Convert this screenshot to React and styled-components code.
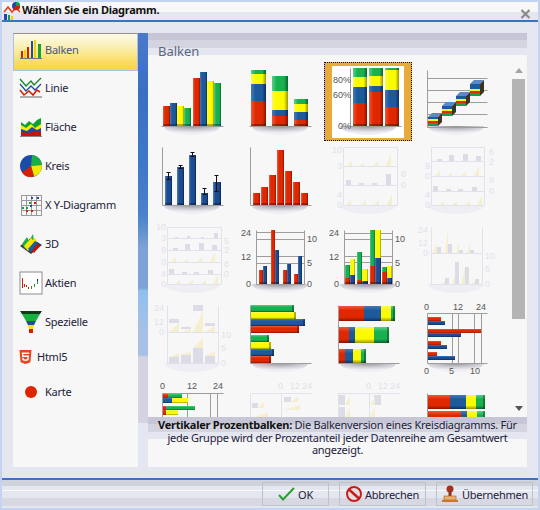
import React from "react";
import styled, { createGlobalStyle } from "styled-components";
import { FaHtml5 } from "react-icons/fa";

const FONT = `"Noto Sans", "DejaVu Sans", sans-serif`;

const Global = createGlobalStyle`
  html, body { margin: 0; padding: 0; background: #e4e6f0; }
  * { box-sizing: border-box; }
`;

const Window = styled.div`
  width: 540px;
  height: 510px;
  display: flex;
  flex-direction: column;
  border: 2px solid #c2d4f0;
  background: #e4e6f0;
  font-family: ${FONT};
  font-size: 11px;
  letter-spacing: -0.25px;
  color: #1c2238;
  overflow: hidden;
`;

const TitleBar = styled.div`
  height: 20px;
  flex: none;
  display: flex;
  align-items: center;
  gap: 1px;
  padding: 0 7px 0 1px;
  border-bottom: 2px solid #3a72c6;
  background: linear-gradient(#f7f7f7 0 10px, #e4e6f0 10px);
`;

const TitleText = styled.span`
  flex: 1;
  font-weight: bold;
  font-size: 11px;
  color: #111;
  margin-top: -4px;
`;

const Main = styled.div`
  flex: 1;
  min-height: 0;
  display: flex;
  padding: 11px 11px 11px;
`;

const Sidebar = styled.div`
  width: 125px;
  flex: none;
  display: flex;
  flex-direction: column;
  background: #f7f7f7;
`;

const SideItem = styled.div`
  height: ${(p) => (p.$short ? 31 : 39)}px;
  flex: none;
  display: flex;
  align-items: center;
  gap: ${(p) => (p.$tight ? 4 : 2)}px;
  padding-left: ${(p) => (p.$tight ? 5 : 6)}px;
  padding-bottom: 8px;
  color: ${(p) => (p.$active ? "#4a5674" : "#1c2238")};
  ${(p) =>
    p.$active &&
    `
    height: 38px;
    margin-bottom: 1px;
    border: 1px solid #a9c2e6;
    border-top: 1px solid #9a8f88;
    padding-left: 5px;
    padding-bottom: 6px;
    background: linear-gradient(#fdfbe8 0, #faf0b8 12px, #fbe88e 20px, #fbdc62 28px, #fad344 100%);
  `}
`;

const IconSlot = styled.span`
  width: ${(p) => p.$size || 24}px;
  height: ${(p) => p.$size || 24}px;
  flex: none;
  display: flex;
  align-items: center;
  justify-content: center;
  color: #e4461f;
`;

const Strip = styled.div`
  width: 10px;
  flex: none;
  height: 390px;
  background: linear-gradient(
    #4a78cc 0,
    #3a70c4 60px,
    #3f78c8 130px,
    #4a80cc 180px,
    #5a90cc 195px,
    #7ea2d8 215px,
    #7ea2d8 255px,
    #90c0ee 258px,
    #a8c0e6 300px,
    #a8c0e6 322px,
    #d4d4e0 324px
  );
`;

const ChartPanel = styled.div`
  flex: 1;
  min-width: 0;
  display: flex;
  flex-direction: column;
  background: #f7f7f7;
`;

const bands = `linear-gradient(#c6c6d6 0 7px, #d4d4e0 7px 15px, #e4e6f0 15px 22px, #f7f7f7 22px)`;

const PanelHead = styled.div`
  height: 22px;
  flex: none;
  padding: 10px 0 0 10px;
  font-size: 13px;
  line-height: 16px;
  letter-spacing: 0;
  color: #5c6680;
  background: ${bands};
`;

const GalleryRow = styled.div`
  flex: 1;
  min-height: 0;
  display: flex;
`;

const Gallery = styled.div`
  width: 364px;
  flex: none;
  padding-top: 7px;
  overflow: hidden;
  display: grid;
  grid-template-columns: repeat(4, 88px);
  grid-auto-rows: 79px;
`;

const Cell = styled.div`
  width: 88px;
  height: 79px;
  ${(p) =>
    p.$selected &&
    `
    background: linear-gradient(#fff, #fff) 8px 4px / 72px 72px no-repeat, #e6ab3a;
    outline: 1px dotted #111;
    outline-offset: -1px;
  `}
  svg { display: block; }
`;

const ScrollBar = styled.div`
  width: 13px;
  flex: none;
  display: flex;
  flex-direction: column;
  align-items: center;
  padding: 13px 0 6px;
`;

const Arrow = styled.span`
  width: 0;
  height: 0;
  border-left: 4px solid transparent;
  border-right: 4px solid transparent;
  ${(p) => (p.$down ? "border-top: 5px solid #555;" : "border-bottom: 5px solid #a4a4a4;")}
  ${(p) => p.$down && "margin-top: auto;"}
`;

const Thumb = styled.div`
  width: 13px;
  height: 240px;
  margin-top: 6px;
  background: #b4b4b4;
`;

const Description = styled.div`
  height: 50px;
  flex: none;
  padding: 2px 4px 0;
  text-align: center;
  line-height: 12.5px;
  font-size: 11px;
  color: #1c2238;
  background: ${bands};
  b { color: #111; }
`;

const Footer = styled.div`
  height: 30px;
  flex: none;
  display: flex;
  justify-content: flex-end;
  gap: 10px;
  padding: 2px 5px 0 0;
  border-top: 2px solid #3a72c6;
  background: linear-gradient(
    #d0d2dc 0 6px,
    #e4e6f0 6px 10px,
    #fafafc 10px 11px,
    #e4e6f0 11px 18px,
    #d8d8e2 18px 26px,
    #e4e6f0 26px
  );
`;

const Button = styled.button`
  width: ${(p) => p.$width}px;
  height: 24px;
  display: flex;
  align-items: center;
  justify-content: center;
  gap: 3px;
  padding: 0;
  border: 1px solid #b8c6c6;
  background: transparent;
  font-family: ${FONT};
  font-size: 11px;
  letter-spacing: -0.25px;
  color: #1c2238;
`;

const Defs = styled.svg`
  width: 0;
  height: 0;
  flex: none;
`;

/* chart helpers, everything in 88x79 cell coordinates */
const RAMP = {
  r: ["#f0583a", "#e02800", "#8a1400"],
  b: ["#4878b8", "#1c5a9c", "#0e2c5c"],
  y: ["#fff84a", "#fafa00", "#989400"],
  g: ["#58d088", "#18b050", "#0a6030"],
  n: ["#5080c0", "#1c4c90", "#0a2450"],
};

const hl = (y, x1 = 14, x2 = 75) => [x1, y, x2, y];
const vl = (x, y1 = 6, y2 = 64) => [x, y1, x, y2];

const col = (x, w, c, top, bottom = 64) => ({ x, w, c, top, bottom });
const stack = (x, w, parts, bottom = 64) => {
  let low = bottom;
  return parts.map(([c, top]) => {
    const bar = col(x, w, c, top, low);
    low = top;
    return bar;
  });
};
const hstack = (y, h, x0, parts) => {
  let from = x0;
  return parts.map(([c, to], i) => {
    const bar = { y, h, x: from, to, c, cap: h > 5 && i === parts.length - 1 };
    from = to;
    return bar;
  });
};
const wedge = (x, w, h, base) => ({ x, w, top: base - h, bottom: base });
const gray = (x, w, h, base) => ({ x, w, top: base - h, bottom: base });

const SPECS = [
  // row 1
  {
    shadow: true,
    lines: [hl(64, 13, 75)],
    bars: [
      col(15, 7, "r", 44), col(22, 7, "b", 41), col(29, 7, "y", 44), col(36, 7, "g", 46),
      col(45, 7, "r", 16), col(52, 7, "b", 10), col(59, 7, "y", 19), col(66, 7, "g", 21),
    ],
  },
  {
    shadow: true,
    lines: [hl(64, 13, 75)],
    bars: [
      ...stack(15, 15, [["r", 39], ["b", 22], ["y", 12], ["g", 8]]),
      ...stack(36, 16, [["r", 54], ["b", 48], ["y", 29], ["g", 14]]),
      ...stack(58, 14, [["r", 58], ["b", 50], ["y", 42], ["g", 37]]),
    ],
  },
  {
    shadow: true,
    selected: true,
    lines: [vl(26, 6, 64), hl(64, 26, 77)],
    bars: [
      ...stack(29, 14, [["r", 41], ["b", 25], ["y", 15], ["g", 6]]),
      ...stack(45, 14, [["r", 30], ["b", 24], ["y", 14], ["g", 6]]),
      ...stack(61, 14, [["r", 45], ["b", 28], ["y", 8], ["g", 6]]),
    ],
    labels: [[9, 21, "80%"], [9, 36, "60%"], [14, 67, "0%"]],
  },
  {
    shadow: true,
    lines: [hl(16, 15, 75), hl(28, 15, 75), hl(40, 15, 75), hl(52, 15, 75), vl(15, 8, 65), hl(65, 15, 75)],
    steps: [[16, 51, 13], [30, 40, 14], [44, 30, 14], [58, 18, 16]],
  },
  // row 2
  {
    shadow: true,
    lines: [vl(14), hl(64)],
    bars: [col(17, 7, "n", 35), col(29, 7, "n", 26), col(41, 7, "n", 14), col(53, 7, "n", 52), col(65, 8, "n", 41)],
    errs: [[20, 31, 39], [32, 24, 28], [44, 11, 16], [56, 47, 54], [68, 34, 51]],
  },
  {
    shadow: true,
    lines: [vl(14), hl(64)],
    bars: [17, 25, 33, 41, 49, 57, 65].map((x, i) => col(x, 7, "r", [52, 46, 34, 9, 30, 41, 52][i])),
  },
  {
    faint: true,
    lines: [hl(6, 19, 73), hl(25, 19, 73), hl(44, 19, 73), hl(64, 19, 73), vl(19, 6, 64), vl(73, 6, 64)],
    wedges: [
      wedge(23, 5, 5, 25), wedge(35, 5, 3, 25), wedge(49, 5, 5, 25), wedge(62, 5, 12, 25),
      wedge(22, 5, 5, 64), wedge(37, 5, 5, 64), wedge(50, 5, 5, 64), wedge(63, 5, 11, 64),
    ],
    grays: [gray(22, 5, 5, 44), gray(35, 5, 2, 44), gray(48, 5, 2, 44), gray(62, 5, 11, 44)],
    labels: [[8, 12, "10"], [13, 28, "3"], [77, 36, "8"], [77, 47, "0"], [13, 57, "4"], [13, 67, "0"]],
  },
  {
    faint: true,
    lines: [hl(6, 19, 72), hl(20, 19, 72), hl(35, 19, 72), hl(50, 19, 72), hl(64, 19, 72), vl(19, 6, 64), vl(72, 6, 64)],
    grays: [
      gray(25, 5, 2, 20), gray(37, 5, 6, 20), gray(51, 5, 7, 20), gray(64, 5, 5, 20),
      gray(21, 5, 5, 50), gray(34, 5, 2, 50), gray(46, 5, 2, 50), gray(60, 5, 4, 50),
    ],
    wedges: [
      wedge(23, 5, 5, 35), wedge(35, 5, 3, 35), wedge(49, 5, 5, 35), wedge(62, 5, 10, 35),
      wedge(27, 5, 4, 64), wedge(40, 5, 4, 64), wedge(53, 5, 4, 64), wedge(65, 5, 9, 64),
    ],
    labels: [[77, 14, "6"], [77, 24, "2"], [77, 42, "8"], [77, 53, "0"], [13, 28, "9"], [13, 38, "0"], [13, 57, "4"], [13, 67, "0"]],
  },
  // row 3
  {
    faint: true,
    lines: [hl(7, 19, 73), hl(18, 19, 73), hl(30, 19, 73), hl(42, 19, 73), hl(54, 19, 73), hl(64, 19, 73), vl(19, 7, 64), vl(73, 7, 64)],
    grays: [
      gray(27, 3, 1, 18), gray(39, 3, 2, 18), gray(53, 3, 1, 18), gray(66, 4, 5, 18),
      gray(25, 5, 2, 30), gray(37, 5, 6, 30), gray(51, 5, 7, 30), gray(64, 5, 5, 30),
      gray(21, 5, 5, 54), gray(34, 5, 2, 54), gray(46, 5, 2, 54), gray(60, 5, 4, 54),
    ],
    wedges: [
      wedge(23, 5, 5, 42), wedge(35, 5, 3, 42), wedge(49, 5, 5, 42), wedge(62, 5, 10, 42),
      wedge(27, 5, 4, 64), wedge(40, 5, 4, 64), wedge(53, 5, 4, 64), wedge(65, 5, 9, 64),
    ],
    labels: [[8, 10, "10"], [13, 21, "3"], [13, 33, "9"], [13, 45, "0"], [13, 57, "4"], [13, 67, "0"], [76, 24, "5"], [76, 33, "2"], [76, 47, "8"], [76, 57, "0"]],
  },
  {
    shadow: true,
    lines: [hl(12, 20, 68), hl(19, 20, 68), hl(36, 20, 68), hl(43, 20, 68), vl(20, 10, 64), vl(68, 10, 64), hl(64, 20, 68)],
    bars: [
      col(23, 4, "r", 50), col(27, 4, "n", 46), col(35, 4, "r", 10), col(39, 4, "n", 30),
      col(47, 4, "r", 50), col(51, 4, "n", 44), col(58, 4, "r", 54), col(62, 4, "n", 36),
    ],
    labels: [[5, 16, "24"], [5, 40, "12"], [10, 67, "0"], [71, 22, "10"], [71, 46, "5"], [71, 67, "0"]],
  },
  {
    shadow: true,
    lines: [hl(13, 20, 68), hl(19, 20, 68), hl(36, 20, 68), hl(42, 20, 68), vl(20, 10, 64), vl(68, 10, 64), hl(64, 20, 68)],
    bars: [
      ...stack(21, 5, [["r", 58], ["g", 45]]), ...stack(26, 5, [["n", 55], ["y", 39]]),
      ...stack(33, 5, [["r", 60], ["g", 32]]), ...stack(38, 6, [["n", 61], ["y", 49]]),
      ...stack(46, 5, [["r", 46], ["g", 10]]), ...stack(51, 6, [["n", 38], ["y", 10]]),
      ...stack(58, 5, [["r", 52], ["g", 47]]), ...stack(63, 5, [["n", 58], ["y", 46]]),
    ],
    labels: [[5, 16, "24"], [5, 40, "12"], [10, 67, "0"], [71, 22, "10"], [71, 46, "5"], [71, 67, "0"]],
  },
  {
    faint: true,
    lines: [vl(19, 7, 64), vl(70, 7, 64), hl(33, 19, 70), hl(64, 19, 70)],
    wedges: [
      wedge(21, 4, 10, 33), wedge(33, 3, 23, 33), wedge(44, 3, 10, 33), wedge(55, 3, 10, 33),
      wedge(29, 4, 3, 64), wedge(40, 3, 9, 64), wedge(49, 4, 17, 64), wedge(59, 4, 3, 64),
    ],
    grays: [
      gray(25, 4, 6, 33), gray(36, 4, 9, 33), gray(47, 4, 3, 33), gray(58, 4, 3, 33),
      gray(33, 4, 6, 64), gray(43, 4, 22, 64), gray(53, 4, 17, 64), gray(63, 4, 5, 64),
    ],
    labels: [[6, 13, "24"], [6, 26, "12"], [11, 36, "0"], [73, 39, "10"], [73, 52, "5"], [73, 67, "0"]],
  },
  // row 4
  {
    faint: true,
    lines: [vl(19, 6, 64), vl(70, 6, 64), hl(33, 19, 70), hl(64, 19, 70)],
    grays: [
      gray(21, 10, 4, 24), gray(33, 10, 2, 30), gray(45, 10, 6, 12), gray(57, 10, 3, 27),
      gray(21, 10, 6, 64), gray(33, 10, 8, 64), gray(45, 10, 15, 64), gray(57, 10, 7, 64),
    ],
    wedges: [
      wedge(21, 10, 9, 33), wedge(33, 10, 3, 33), wedge(45, 10, 21, 33), wedge(57, 10, 6, 33),
      wedge(21, 10, 4, 58), wedge(33, 10, 4, 56), wedge(45, 10, 10, 49), wedge(57, 10, 5, 57),
    ],
    labels: [[6, 12, "24"], [6, 26, "12"], [11, 36, "0"], [73, 39, "10"], [73, 52, "5"], [73, 67, "0"]],
  },
  {
    shadow: true,
    lines: [vl(14), hl(64)],
    hbars: [
      ...hstack(6, 7, 15, [["g", 58]]), ...hstack(13, 7, 15, [["y", 60]]),
      ...hstack(20, 7, 15, [["b", 69]]), ...hstack(27, 7, 15, [["r", 63]]),
      ...hstack(36, 7, 15, [["g", 33]]), ...hstack(43, 7, 15, [["y", 35]]),
      ...hstack(50, 7, 15, [["b", 38]]), ...hstack(57, 7, 15, [["r", 35]]),
    ],
  },
  {
    shadow: true,
    lines: [vl(14, 6, 64), hl(64)],
    hbars: [
      ...hstack(7, 15, 15, [["r", 40], ["b", 57], ["y", 67], ["g", 71]]),
      ...hstack(28, 16, 15, [["r", 25], ["b", 31], ["y", 50], ["g", 65]]),
      ...hstack(50, 14, 15, [["r", 21], ["b", 29], ["y", 37], ["g", 42]]),
    ],
  },
  {
    shadow: true,
    lines: [hl(14, 15, 75), vl(15, 14, 64), hl(64, 15, 75), vl(40, 14, 64), vl(46, 14, 64), vl(62, 14, 64), vl(69, 14, 64)],
    hbars: [
      ...hstack(18, 4, 16, [["r", 29]]), ...hstack(22, 4, 16, [["n", 33]]),
      ...hstack(30, 4, 16, [["r", 69]]), ...hstack(34, 4, 16, [["n", 49]]),
      ...hstack(42, 4, 16, [["r", 29]]), ...hstack(46, 4, 16, [["n", 35]]),
      ...hstack(53, 4, 16, [["r", 25]]), ...hstack(57, 4, 16, [["n", 43]]),
    ],
    labels: [[12, 11, "0"], [41, 11, "12"], [64, 11, "24"], [12, 75, "0"], [37, 75, "5"], [58, 75, "10"]],
  },
  // row 5, cut off by the description
  {
    lines: [hl(15, 14, 75), vl(14, 15, 40), vl(39, 15, 40), vl(62, 15, 40), vl(69, 15, 40)],
    hbars: [
      ...hstack(16, 4, 15, [["r", 20], ["g", 34]]), ...hstack(20, 5, 15, [["b", 24], ["y", 40]]),
      ...hstack(28, 4, 15, [["r", 18], ["g", 47]]), ...hstack(32, 5, 15, [["r", 18], ["y", 30]]),
    ],
    labels: [[12, 11, "0"], [39, 11, "12"], [65, 11, "24"]],
  },
  {
    faint: true,
    lines: [hl(15, 14, 75), vl(14, 15, 40), vl(45, 15, 40)],
    grays: [gray(16, 6, 5, 30), gray(48, 7, 5, 24)],
    wedges: [wedge(22, 6, 6, 30), wedge(55, 7, 6, 24), wedge(16, 16, 6, 40), wedge(48, 16, 5, 32)],
    labels: [[42, 11, "0"], [54, 11, "12"], [66, 11, "24"]],
  },
  {
    faint: true,
    lines: [hl(15, 14, 75), vl(14, 15, 40), vl(45, 15, 40)],
    grays: [gray(15, 6, 10, 27), gray(15, 6, 10, 39), gray(50, 7, 10, 27)],
    wedges: [wedge(21, 5, 10, 27), wedge(21, 5, 10, 39), wedge(46, 5, 8, 27), wedge(46, 5, 10, 39)],
    labels: [[42, 11, "0"], [54, 11, "12"], [66, 11, "24"]],
  },
  {
    lines: [vl(15, 15, 40)],
    hbars: [
      ...hstack(17, 14, 16, [["r", 38], ["b", 54], ["y", 64], ["g", 73]]),
      ...hstack(33, 14, 16, [["r", 49], ["b", 55], ["y", 65], ["g", 73]]),
    ],
  },
];

function Step({ x, y, h }) {
  const front = y + 4;
  return (
    <g>
      <polygon points={`${x},${front} ${x + 4},${y} ${x + 14},${y} ${x + 10},${front}`} fill="#5a88c8" />
      <polygon points={`${x + 10},${front} ${x + 14},${y} ${x + 14},${y + h - 4} ${x + 10},${y + h}`} fill="#3c3420" />
      <rect x={x} y={front} width={10} height={h - 4} fill="#18a048" />
      <rect x={x} y={front} width={10} height={h - 7} fill="#e02800" />
      <rect x={x} y={front} width={10} height={h - 9} fill="#fafa00" />
      <rect x={x} y={front} width={10} height={h - 11} fill="#1c5a9c" />
    </g>
  );
}

function Chart({ spec }) {
  const { faint, shadow, lines = [], bars = [], hbars = [], errs = [], steps = [], labels = [], grays = [], wedges = [] } = spec;
  const line = faint ? "#e2e2ec" : "#a09c9c";
  return (
    <svg width="88" height="79" viewBox="0 0 88 79">
      {(shadow || faint) && <path d="M16,64 A28,9 0 0 0 72,64 Z" fill={faint ? "#eeeef4" : "url(#floor)"} />}
      {lines.map((l, i) => (
        <line key={i} x1={l[0]} y1={l[1] + 0.5} x2={l[2]} y2={l[3] + 0.5} transform="translate(0.5 0)" stroke={line} />
      ))}
      {grays.map((b, i) => (
        <rect key={i} x={b.x} y={b.top} width={b.w} height={b.bottom - b.top} fill="#dcdce6" />
      ))}
      {wedges.map((b, i) => (
        <polygon
          key={i}
          points={`${b.x},${b.bottom} ${b.x + b.w},${b.bottom} ${b.x + b.w},${b.top} ${b.x + b.w / 2},${b.top + (b.bottom - b.top) / 2}`}
          fill="#f6efcf"
        />
      ))}
      {bars.map((b, i) => (
        <g key={i}>
          <rect x={b.x} y={b.top} width={b.w} height={b.bottom - b.top} fill={`url(#v-${b.c})`} />
          {b.bottom === 64 && <rect x={b.x} y={62} width={b.w} height={2} fill="#000" opacity="0.3" />}
        </g>
      ))}
      {hbars.map((b, i) => (
        <g key={i}>
          <rect x={b.x} y={b.y} width={b.to - b.x} height={b.h} fill={`url(#h-${b.c})`} />
          {b.cap && <rect x={b.to - 2} y={b.y} width={2} height={b.h} fill="#000" opacity="0.3" />}
        </g>
      ))}
      {errs.map(([x, y1, y2], i) => (
        <path key={i} d={`M${x + 0.5},${y1} V${y2} M${x - 1.5},${y1 + 0.5} h4 M${x - 1.5},${y2 - 0.5} h4`} stroke="#111" fill="none" />
      ))}
      {steps.map(([x, y, h], i) => (
        <Step key={i} x={x} y={y} h={h} />
      ))}
      {labels.map(([x, y, t], i) => (
        <text key={i} x={x} y={y} fontFamily='"Liberation Sans", sans-serif' fontSize="9" letterSpacing="0" fill={faint ? "#e2e2ea" : "#555"}>
          {t}
        </text>
      ))}
    </svg>
  );
}

function SharedDefs() {
  return (
    <Defs aria-hidden="true">
      <defs>
        {Object.entries(RAMP).map(([k, [a, m, d]]) => (
          <React.Fragment key={k}>
            <linearGradient id={`v-${k}`} x1="0" x2="1" y1="0" y2="0">
              <stop offset="0" stopColor={a} />
              <stop offset="0.3" stopColor={m} />
              <stop offset="0.75" stopColor={m} />
              <stop offset="1" stopColor={d} />
            </linearGradient>
            <linearGradient id={`h-${k}`} x1="0" x2="0" y1="0" y2="1">
              <stop offset="0" stopColor={a} />
              <stop offset="0.3" stopColor={m} />
              <stop offset="0.75" stopColor={m} />
              <stop offset="1" stopColor={d} />
            </linearGradient>
          </React.Fragment>
        ))}
        <radialGradient id="floor" cx="0.5" cy="0" r="0.75">
          <stop offset="0" stopColor="#8c8c94" />
          <stop offset="0.5" stopColor="#c4c4cc" />
          <stop offset="1" stopColor="#eeeef4" />
        </radialGradient>
      </defs>
    </Defs>
  );
}

const BalkenIcon = () => (
  <svg width="24" height="24" viewBox="0 0 24 24">
    <rect x="2" y="14" width="2" height="7" fill="#d81e00" />
    <rect x="5" y="13" width="2" height="8" fill="#f0d000" />
    <rect x="8" y="10" width="2" height="11" fill="#d81e00" />
    <rect x="12" y="4" width="2" height="17" fill="#1c4ca8" />
    <rect x="15" y="3" width="2" height="18" fill="#f0d000" />
    <rect x="19" y="7" width="3" height="14" fill="#18a030" />
    <rect x="1" y="21" width="22" height="1" fill="#6c7878" />
  </svg>
);

const LinieIcon = () => (
  <svg width="24" height="24" viewBox="0 0 24 24" fill="none" strokeWidth="1.3">
    <path d="M1,3 L7,10 L12,5 L15,9 L22,2" stroke="#108a20" />
    <path d="M1,8 L7,15 L12,10 L16,14 L22,8" stroke="#1c4ca8" />
    <path d="M1,14 L5,19 L10,15 L14,19 L18,14 L21,16" stroke="#d81e00" strokeWidth="1.6" />
    <path d="M1,21 H23" stroke="#808888" />
  </svg>
);

const FlaecheIcon = () => (
  <svg width="24" height="24" viewBox="0 0 24 24">
    <path d="M2,7 L6,10 L10,6 L14,9 L18,5 L22,3 V21 H2 Z" fill="#10a030" />
    <path d="M2,10 L7,13 L12,9 L16,13 L22,9 V21 H2 Z" fill="#f8f000" />
    <path d="M2,14 L8,16 L13,12 L18,15 L22,13 V21 H2 Z" fill="#1c4ca8" />
    <path d="M2,17 L10,18 L16,16 L22,17 V21 H2 Z" fill="#c81400" />
    <rect x="1" y="21" width="22" height="1" fill="#808888" />
  </svg>
);

const KreisIcon = () => (
  <svg width="24" height="24" viewBox="0 0 24 24">
    <circle cx="12" cy="12" r="11" fill="#1c4ca8" />
    <path d="M12,12 L13,1 A11,11 0 0 1 23,11 Z" fill="#18b040" />
    <path d="M12,12 L23,11 A11,11 0 0 1 15,22.5 Z" fill="#f4e800" />
    <path d="M12,12 L15,22.5 A11,11 0 0 1 3,18.5 Z" fill="#d82000" />
  </svg>
);

const XYIcon = () => (
  <svg width="24" height="24" viewBox="0 0 24 24">
    <path
      d="M2.5,2 V22 M7.5,2 V22 M12.5,2 V22 M17.5,2 V22 M22.5,2 V22 M2,2.5 H23 M2,7.5 H23 M2,12.5 H23 M2,17.5 H23 M2,22.5 H23"
      stroke="#9a9a9a"
      fill="none"
    />
    <g fill="#1c4ca8"><rect x="12" y="4" width="2" height="2" /><rect x="18" y="4" width="2" height="2" /><rect x="11" y="12" width="2" height="2" /></g>
    <g fill="#d81e00"><rect x="15" y="9" width="2" height="2" /><rect x="7" y="17" width="2" height="2" /><rect x="12" y="17" width="2" height="2" /></g>
    <g fill="#18a040"><rect x="10" y="9" width="2" height="2" /><rect x="3" y="14" width="2" height="2" /><rect x="7" y="14" width="2" height="2" /></g>
  </svg>
);

const ThreeDIcon = () => (
  <svg width="24" height="24" viewBox="0 0 24 24">
    <polygon points="1,14 12,22 23,13 12,6" fill="#3c3c44" />
    <polygon points="3,12 8,5 10,9 14,2 15,9 6,17" fill="#18b040" />
    <polygon points="5,14 12,6 14,8 16,6 18,9 9,19" fill="#f4e800" />
    <polygon points="9,17 16,9 19,11 12,20" fill="#1c5aa8" />
    <polygon points="13,19 18,12 21,14 15,21" fill="#c81400" />
  </svg>
);

const AktienIcon = () => (
  <svg width="24" height="24" viewBox="0 0 24 24">
    <rect x="1" y="1" width="22" height="22" fill="#fff" stroke="#8c8c8c" />
    <g fill="#d81e00">
      <rect x="3" y="7" width="1" height="9" />
      <rect x="5" y="13" width="1" height="3" />
      <rect x="7" y="14" width="1" height="2" />
      <rect x="9" y="16" width="1" height="2" />
    </g>
    <g fill="#18a040">
      <rect x="12" y="15" width="1" height="3" />
      <rect x="15" y="13" width="1" height="3" />
      <rect x="18" y="10" width="1" height="3" />
    </g>
    <rect x="3" y="16" width="1" height="1" fill="#222" />
    <rect x="18" y="8" width="1" height="2" fill="#222" />
  </svg>
);

const FunnelIcon = () => (
  <svg width="24" height="24" viewBox="0 0 24 24">
    <polygon points="1,1 23,1 21,4 3,4" fill="#0c3c18" />
    <polygon points="3,4 21,4 17,11 7,11" fill="#18b040" />
    <polygon points="7,11 17,11 15,15 9,15" fill="#1c4ca8" />
    <polygon points="9,15 15,15 14,19 10,19" fill="#f4e800" />
    <rect x="10" y="19" width="4" height="4" fill="#d81e00" />
  </svg>
);

const KarteIcon = () => (
  <svg width="24" height="24" viewBox="0 0 24 24">
    <circle cx="12" cy="12" r="6" fill="#e02400" />
  </svg>
);

const AppIcon = () => (
  <svg width="18" height="18" viewBox="0 0 18 18" style={{ flex: "none" }}>
    <rect x="1" y="12" width="3" height="6" fill="#1c4ca8" />
    <rect x="5" y="13" width="2" height="5" fill="#18a040" />
    <rect x="8" y="14" width="2" height="4" fill="#f0d000" />
    <path d="M1,10 L5,5 L9,10 L13,6 L17,10" stroke="#e04020" strokeWidth="1.6" fill="none" />
    <circle cx="13" cy="4" r="4" fill="#1c4ca8" />
    <path d="M13,4 L13,0 A4,4 0 0 1 17,4 Z" fill="#18a040" />
    <path d="M13,4 L17,4 A4,4 0 0 1 10,7 Z" fill="#d81e00" />
  </svg>
);

const CloseIcon = () => (
  <svg width="11" height="10" viewBox="0 0 11 10" style={{ marginTop: 6 }}>
    <path d="M1.5,1 L9.5,9 M9.5,1 L1.5,9" stroke="#8a8a8a" strokeWidth="2.2" />
  </svg>
);

const CheckIcon = () => (
  <svg width="17" height="14" viewBox="0 0 17 14">
    <path d="M1,8 L5,12.5 L16,1" stroke="#2ca02c" strokeWidth="2" fill="none" />
  </svg>
);

const CancelIcon = () => (
  <svg width="16" height="16" viewBox="0 0 16 16">
    <circle cx="8" cy="8" r="7" fill="#e4e0e0" stroke="#c81c1c" strokeWidth="2" />
    <path d="M3,3.5 L13,12.5" stroke="#c81c1c" strokeWidth="2.4" />
  </svg>
);

const StampIcon = () => (
  <svg width="18" height="18" viewBox="0 0 18 18">
    <circle cx="9" cy="4" r="3.5" fill="#a83020" />
    <rect x="7.5" y="7" width="3" height="5" fill="#883020" />
    <rect x="3" y="11" width="12" height="4" fill="#e8b070" stroke="#a06020" strokeWidth="0.6" />
    <rect x="1" y="15" width="16" height="2" fill="#c87830" />
  </svg>
);

const ITEMS = [
  { label: "Balken", icon: <BalkenIcon />, active: true },
  { label: "Linie", icon: <LinieIcon /> },
  { label: "Fläche", icon: <FlaecheIcon /> },
  { label: "Kreis", icon: <KreisIcon /> },
  { label: "X Y-Diagramm", icon: <XYIcon /> },
  { label: "3D", icon: <ThreeDIcon /> },
  { label: "Aktien", icon: <AktienIcon /> },
  { label: "Spezielle", icon: <FunnelIcon /> },
  { label: "Html5", icon: <FaHtml5 size={16} />, short: true, tight: true, size: 15 },
  { label: "Karte", icon: <KarteIcon /> },
];

export default function App() {
  return (
    <>
      <Global />
      <Window>
        <SharedDefs />
        <TitleBar>
          <AppIcon />
          <TitleText>Wählen Sie ein Diagramm.</TitleText>
          <CloseIcon />
        </TitleBar>
        <Main>
          <Sidebar>
            {ITEMS.map((item) => (
              <SideItem key={item.label} $active={item.active} $short={item.short} $tight={item.tight}>
                <IconSlot $size={item.size}>{item.icon}</IconSlot>
                {item.label}
              </SideItem>
            ))}
          </Sidebar>
          <Strip />
          <ChartPanel>
            <PanelHead>Balken</PanelHead>
            <GalleryRow>
              <Gallery>
                {SPECS.map((spec, i) => (
                  <Cell key={i} $selected={spec.selected}>
                    <Chart spec={spec} />
                  </Cell>
                ))}
              </Gallery>
              <ScrollBar>
                <Arrow />
                <Thumb />
                <Arrow $down />
              </ScrollBar>
            </GalleryRow>
            <Description>
              <b>Vertikaler Prozentbalken:</b> Die Balkenversion eines Kreisdiagramms. Für jede Gruppe wird der Prozentanteil jeder Datenreihe am Gesamtwert angezeigt.
            </Description>
          </ChartPanel>
        </Main>
        <Footer>
          <Button $width={67}><CheckIcon />OK</Button>
          <Button $width={87}><CancelIcon />Abbrechen</Button>
          <Button $width={97}><StampIcon />Übernehmen</Button>
        </Footer>
      </Window>
    </>
  );
}
